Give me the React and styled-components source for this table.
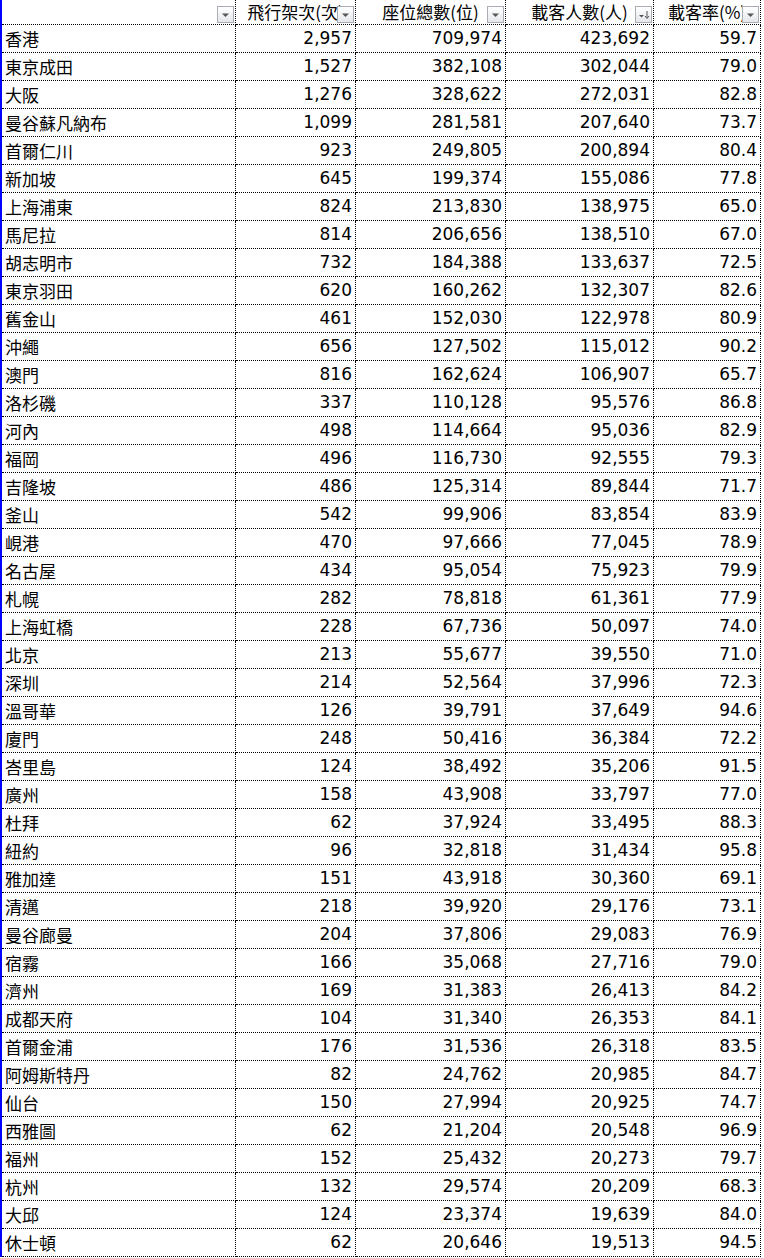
import React from 'react';
import styled, { createGlobalStyle } from 'styled-components';

const GlobalStyle = createGlobalStyle`
  html, body {
    margin: 0;
    padding: 0;
    background: #ffffff;
  }
`;

const rows = [
  ['香港', '2,957', '709,974', '423,692', '59.7'],
  ['東京成田', '1,527', '382,108', '302,044', '79.0'],
  ['大阪', '1,276', '328,622', '272,031', '82.8'],
  ['曼谷蘇凡納布', '1,099', '281,581', '207,640', '73.7'],
  ['首爾仁川', '923', '249,805', '200,894', '80.4'],
  ['新加坡', '645', '199,374', '155,086', '77.8'],
  ['上海浦東', '824', '213,830', '138,975', '65.0'],
  ['馬尼拉', '814', '206,656', '138,510', '67.0'],
  ['胡志明市', '732', '184,388', '133,637', '72.5'],
  ['東京羽田', '620', '160,262', '132,307', '82.6'],
  ['舊金山', '461', '152,030', '122,978', '80.9'],
  ['沖繩', '656', '127,502', '115,012', '90.2'],
  ['澳門', '816', '162,624', '106,907', '65.7'],
  ['洛杉磯', '337', '110,128', '95,576', '86.8'],
  ['河內', '498', '114,664', '95,036', '82.9'],
  ['福岡', '496', '116,730', '92,555', '79.3'],
  ['吉隆坡', '486', '125,314', '89,844', '71.7'],
  ['釜山', '542', '99,906', '83,854', '83.9'],
  ['峴港', '470', '97,666', '77,045', '78.9'],
  ['名古屋', '434', '95,054', '75,923', '79.9'],
  ['札幌', '282', '78,818', '61,361', '77.9'],
  ['上海虹橋', '228', '67,736', '50,097', '74.0'],
  ['北京', '213', '55,677', '39,550', '71.0'],
  ['深圳', '214', '52,564', '37,996', '72.3'],
  ['溫哥華', '126', '39,791', '37,649', '94.6'],
  ['廈門', '248', '50,416', '36,384', '72.2'],
  ['峇里島', '124', '38,492', '35,206', '91.5'],
  ['廣州', '158', '43,908', '33,797', '77.0'],
  ['杜拜', '62', '37,924', '33,495', '88.3'],
  ['紐約', '96', '32,818', '31,434', '95.8'],
  ['雅加達', '151', '43,918', '30,360', '69.1'],
  ['清邁', '218', '39,920', '29,176', '73.1'],
  ['曼谷廊曼', '204', '37,806', '29,083', '76.9'],
  ['宿霧', '166', '35,068', '27,716', '79.0'],
  ['濟州', '169', '31,383', '26,413', '84.2'],
  ['成都天府', '104', '31,340', '26,353', '84.1'],
  ['首爾金浦', '176', '31,536', '26,318', '83.5'],
  ['阿姆斯特丹', '82', '24,762', '20,985', '84.7'],
  ['仙台', '150', '27,994', '20,925', '74.7'],
  ['西雅圖', '62', '21,204', '20,548', '96.9'],
  ['福州', '152', '25,432', '20,273', '79.7'],
  ['杭州', '132', '29,574', '20,209', '68.3'],
  ['大邱', '124', '23,374', '19,639', '84.0'],
  ['休士頓', '62', '20,646', '19,513', '94.5'],
];

// header labels; the filter button sits over the cell's bottom-right corner
const headers = [
  { label: '', sort: false },
  { label: '飛行架次(次)', sort: false },
  { label: '座位總數(位)', sort: false },
  { label: '載客人數(人)', sort: true },
  { label: '載客率(%)', sort: false },
];

const Sheet = styled.div`
  display: grid;
  grid-template-columns: 234px 120px 150px 148px 107px;
  grid-template-rows: 25px;
  grid-auto-rows: 28px;
  width: max-content;
  border-left: 2px solid #0000ff;
  background: #ffffff;
`;

const Cell = styled.div`
  box-sizing: border-box;
  overflow: hidden;
  white-space: nowrap;
  border-right: 1px dotted #000000;
  border-bottom: 1px dotted #000000;
  color: #000000;
  font-size: 17px;
  line-height: 27px;
  padding: ${(p) => (p.$text ? '0 0 0 3px' : '0 3px 0 0')};
  text-align: ${(p) => (p.$text ? 'left' : 'right')};
  font-family: ${(p) =>
    p.$text ? '"Noto Sans CJK TC", sans-serif' : '"DejaVu Sans", "Noto Sans CJK TC", sans-serif'};
`;

const HeadCell = styled.div`
  box-sizing: border-box;
  position: relative;
  white-space: nowrap;
  border-right: 1px dotted #000000;
  border-bottom: 1px dotted #000000;
  display: flex;
  justify-content: center;
  font-family: "Noto Sans CJK TC", sans-serif;
  font-size: 17px;
  line-height: 23px;
  color: #000000;
`;

const HeadLabel = styled.span`
  flex: none;
`;

const FilterButton = styled.span`
  position: absolute;
  right: 1px;
  bottom: 1px;
  width: 17px;
  height: 17px;
  box-sizing: border-box;
  border: 1px solid #a9aeb5;
  background: linear-gradient(#ffffff, #e4e6ea);
  display: flex;
  align-items: center;
  justify-content: center;
`;

function Filter({ sort }) {
  return (
    <FilterButton>
      {sort ? (
        <svg width="13" height="11" viewBox="0 0 13 11">
          <path d="M2 6h5l-2.5 2.5z" fill="#555" />
          <path d="M10 2v7" stroke="#555" strokeWidth="1" />
          <path d="M8 7l2 2.5 2-2.5" stroke="#555" strokeWidth="1" fill="none" />
        </svg>
      ) : (
        <svg width="9" height="6" viewBox="0 0 9 6">
          <path d="M1 1.5h7l-3.5 3.5z" fill="#555" />
        </svg>
      )}
    </FilterButton>
  );
}

export default function App() {
  return (
    <>
      <GlobalStyle />
      <Sheet>
        {headers.map((h, i) => (
          <HeadCell key={`h${i}`}>
            <HeadLabel>{h.label}</HeadLabel>
            <Filter sort={h.sort} />
          </HeadCell>
        ))}
        {rows.map((r) =>
          r.map((v, j) => (
            <Cell key={`${r[0]}-${j}`} $text={j === 0}>
              {v}
            </Cell>
          ))
        )}
      </Sheet>
    </>
  );
}
